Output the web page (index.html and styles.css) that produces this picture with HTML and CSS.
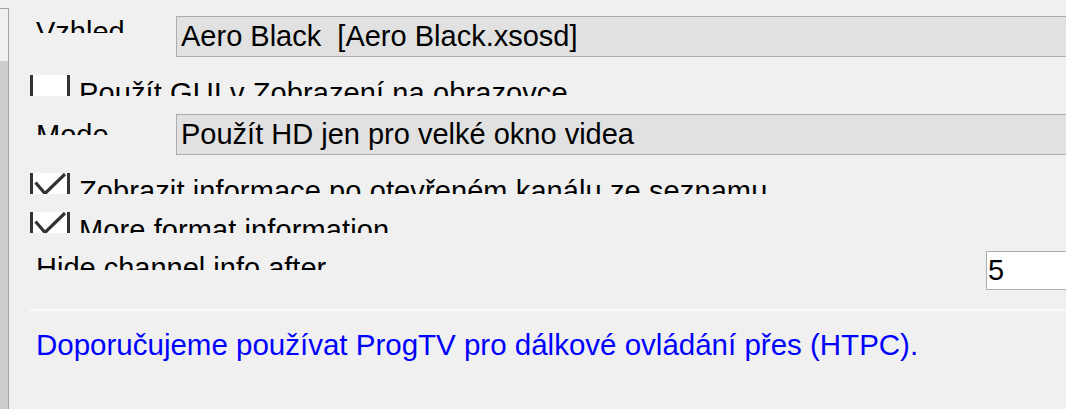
FILE: index.html
```html
<!DOCTYPE html>
<html lang="cs">
<head>
    <meta charset="UTF-8">
    <title>OSD</title>
    <link rel="stylesheet" href="styles.css">
</head>
<body>
    <div class="side">
        <div class="side-thumb"></div>
    </div>

    <main class="panel">
        <div class="row">
            <div class="label label-top">Vzhled</div>
            <div class="combo">Aero Black&nbsp; [Aero Black.xsosd]</div>
        </div>

        <div class="check-row">
            <div class="check"></div>
            <div class="check-label">Použít GUI v Zobrazení na obrazovce</div>
        </div>

        <div class="row">
            <div class="label label-mode">Mode</div>
            <div class="combo">Použít HD jen pro velké okno videa</div>
        </div>

        <div class="check-row">
            <div class="check">
                <svg viewBox="0 0 34 21" width="34" height="21"><polyline points="2.5,9.5 12,20.5 32,1" fill="none" stroke="#333" stroke-width="3.2"/></svg>
            </div>
            <div class="check-label">Zobrazit informace po otevřeném kanálu ze seznamu</div>
        </div>

        <div class="check-row">
            <div class="check">
                <svg viewBox="0 0 34 21" width="34" height="21"><polyline points="2.5,9.5 12,20.5 32,1" fill="none" stroke="#333" stroke-width="3.2"/></svg>
            </div>
            <div class="check-label">More format information</div>
        </div>

        <div class="row">
            <div class="label label-hide">Hide channel info after</div>
            <div class="edit">5</div>
        </div>

        <div class="separator"></div>

        <p class="hint">Doporučujeme používat ProgTV pro dálkové ovládání přes (HTPC).</p>
    </main>
</body>
</html>
```

FILE: styles.css
```css
html, body {
    height: 100%;
}
body {
    margin: 0;
    display: flex;
    overflow: hidden;
    background: #f0f0f0;
    font-family: "Liberation Sans", Arial, sans-serif;
    font-size: 29px;
    line-height: 33px;
    color: #000;
}
.side {
    width: 8px;
    margin-top: 8px;
    border-top: 1px solid #a5a5a5;
    border-right: 1px solid #a5a5a5;
    display: flex;
    flex-direction: column;
    flex-shrink: 0;
}
.side-thumb {
    margin-top: 52px;
    flex: 1;
    background: #cdcdcd;
}
.panel {
    flex: 1;
    display: flex;
    flex-direction: column;
    gap: 18px;
    padding-top: 16px;
    min-width: 0;
}
.row {
    display: flex;
    align-items: flex-start;
}
.label {
    width: 140px;
    padding-left: 27px;
    flex-shrink: 0;
    overflow: hidden;
    white-space: nowrap;
}
.label-top {
    height: 17px;
}
.label-mode {
    margin-top: 5px;
    height: 16px;
}
.label-hide {
    flex: 1;
    margin-top: 1px;
    height: 18px;
}
.combo {
    flex: 1;
    height: 41px;
    box-sizing: border-box;
    margin-right: -30px;
    padding: 3px 4px 0;
    background: #e1e1e1;
    border: 1px solid #adadad;
    white-space: nowrap;
    overflow: hidden;
}
.check-row {
    display: flex;
    height: 21px;
    overflow: hidden;
    padding-left: 21px;
}
.check {
    width: 40px;
    height: 21px;
    box-sizing: border-box;
    border-left: 3px solid #333;
    border-right: 3px solid #333;
    background: #fff;
    flex-shrink: 0;
}
.check svg {
    display: block;
}
.check-label {
    margin-left: 9px;
    padding-top: 2px;
    white-space: nowrap;
    letter-spacing: 0.1px;
}
.edit {
    width: 110px;
    height: 39px;
    box-sizing: border-box;
    margin-right: -30px;
    padding: 2px 1px 0;
    background: #fff;
    border: 1px solid #adadad;
    flex-shrink: 0;
}
.separator {
    height: 2px;
    margin-top: 1px;
    margin-left: 21px;
    background: #fbfbfb;
}
.hint {
    margin: -1px 0 0;
    padding-left: 27px;
    font-size: 29.5px;
    color: #0000ff;
    white-space: nowrap;
}
```
